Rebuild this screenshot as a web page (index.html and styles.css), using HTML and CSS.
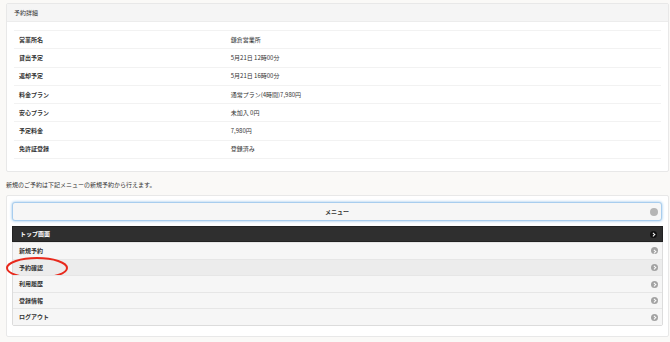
FILE: index.html
```html
<!DOCTYPE html>
<html lang="ja">
<head>
    <meta charset="UTF-8">
    <meta name="viewport" content="width=device-width, initial-scale=1.0">
    <title>予約確認</title>
    <link rel="stylesheet" href="styles.css">
</head>
<body>

<!-- 予約詳細 -->
<div class="card">
    <div class="card-header">予約詳細</div>
    <table class="detail">
        <tr><th>営業所名</th><td>鎌倉営業所</td></tr>
        <tr><th>貸出予定</th><td>5月21日 12時00分</td></tr>
        <tr><th>返却予定</th><td>5月21日 16時00分</td></tr>
        <tr><th>料金プラン</th><td>通常プラン(4時間)7,980円</td></tr>
        <tr><th>安心プラン</th><td>未加入 0円</td></tr>
        <tr><th>予定料金</th><td>7,980円</td></tr>
        <tr><th>免許証登録</th><td>登録済み</td></tr>
    </table>
</div>

<p class="notice">新規のご予約は下記メニューの新規予約から行えます。</p>

<!-- メニュー -->
<div class="card menu-card">
    <div class="menu-button">
        メニュー
        <span class="icon icon-plain"></span>
    </div>
    <ul class="menu-list">
        <li class="dark">トップ画面<span class="icon icon-dark"></span></li>
        <li>新規予約<span class="icon"></span></li>
        <li class="active">予約確認<span class="icon"></span>
            <svg class="mark" width="64" height="24" viewBox="0 0 64 24">
                <ellipse cx="32" cy="12" rx="30" ry="10" fill="none" stroke="#e8291c" stroke-width="2"/>
            </svg>
        </li>
        <li>利用履歴<span class="icon"></span></li>
        <li>登録情報<span class="icon"></span></li>
        <li>ログアウト<span class="icon"></span></li>
    </ul>
</div>

</body>
</html>
```

FILE: styles.css
```css
body {
    font-family: "Noto Sans CJK JP", "Liberation Sans", sans-serif;
    font-size: 6px;
    line-height: 1;
    background-color: #faf9f7;
    color: #333;
    margin: 0;
    padding: 3px 1px 0 6px;
}
.card {
    background-color: #fff;
    border: 1px solid #e8e8e8;
    border-radius: 2px;
    padding-bottom: 12px;
}
.card-header {
    background-color: #f5f5f5;
    border-bottom: 1px solid #ececec;
    height: 17px;
    line-height: 17px;
    padding-left: 7px;
    margin-bottom: 8px;
}
.detail {
    width: calc(100% - 14px);
    margin: 0 7px;
    border-collapse: collapse;
}
.detail tr {
    height: 18.3px;
    border-top: 1px solid #f2f2f2;
}
.detail tr:last-child {
    border-bottom: 1px solid #f2f2f2;
}
.detail th {
    width: 33.5%;
    text-align: left;
    font-weight: bold;
    padding: 0 0 0 5px;
}
.detail td {
    padding: 0;
}
.notice {
    margin: 10px 0 7px;
    height: 6px;
}
.menu-card {
    padding: 6px 5px 10px 5px;
}
.menu-button {
    position: relative;
    background-color: #f6f6f6;
    border: 1px solid #a8cdee;
    border-radius: 3px;
    box-shadow: 0 0 3px #8fbfe8;
    height: 17px;
    line-height: 17px;
    text-align: center;
    font-weight: bold;
    margin: 0 1px 5px 0;
}
.menu-list {
    list-style: none;
    margin: 0;
    padding: 0;
    border: 1px solid #dcdcdc;
    border-radius: 2px;
}
.menu-list li {
    position: relative;
    height: 16.6px;
    line-height: 16.6px;
    padding-left: 6px;
    background-color: #f6f6f6;
    border-top: 1px solid #e6e6e6;
    font-weight: bold;
    box-sizing: border-box;
}
.menu-list li:first-child {
    border-top: none;
}
.menu-list li.dark {
    height: 16px;
    line-height: 14px;
    background-color: #2f2f2f;
    color: #fff;
    margin: -1px -1px 0 -1px;
    padding-left: 7px;
    border: 1px solid #222;
}
.menu-list li.active {
    background-color: #ececec;
}
.icon {
    position: absolute;
    right: 4px;
    top: 50%;
    width: 7px;
    height: 7px;
    margin-top: -3.5px;
    border-radius: 50%;
    background-color: #a3a3a3;
}
.icon::after {
    content: "";
    position: absolute;
    left: 1.6px;
    top: 2.2px;
    width: 1.6px;
    height: 1.6px;
    border-top: 1px solid #fff;
    border-right: 1px solid #fff;
    transform: rotate(45deg);
}
.icon-plain {
    background-color: #b5b5b5;
    width: 8px;
    height: 8px;
    margin-top: -4px;
    right: 3px;
}
.icon-plain::after {
    display: none;
}
.icon-dark {
    background-color: #111;
    right: 5px;
}
.mark {
    position: absolute;
    left: -8px;
    top: -4px;
}
```
